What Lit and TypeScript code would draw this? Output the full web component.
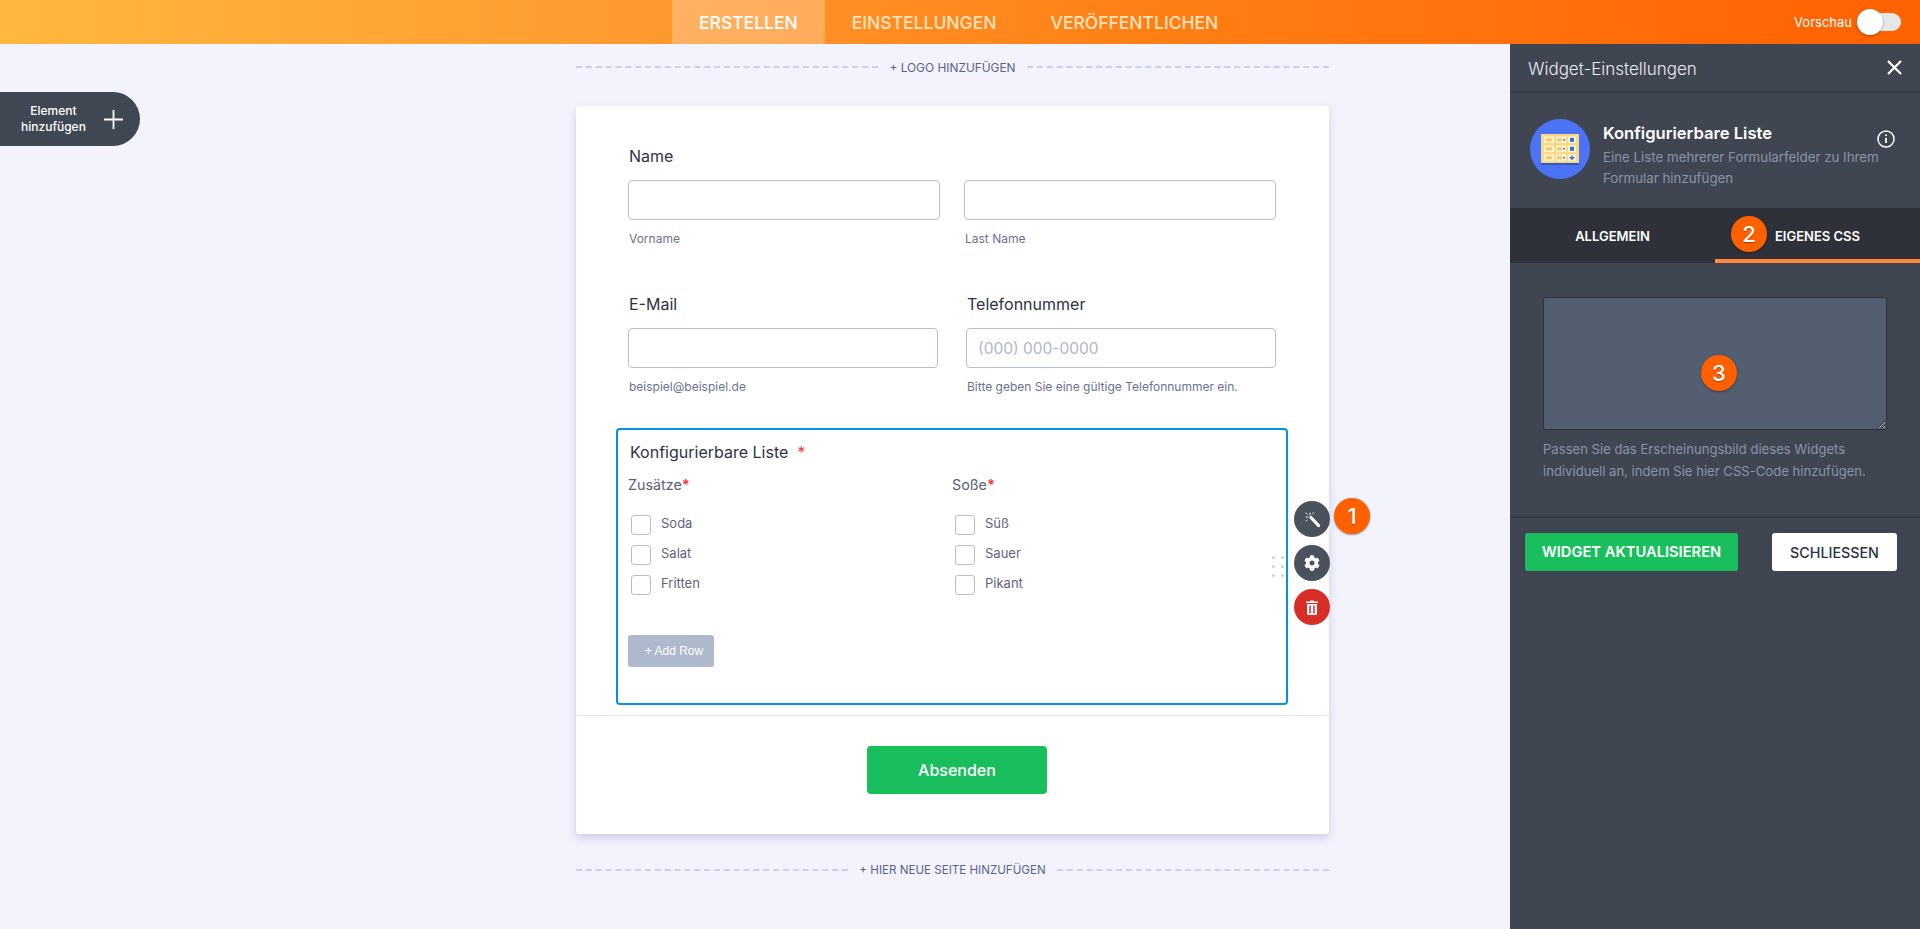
import { LitElement, html, css, svg } from 'lit';
import { customElement } from 'lit/decorators.js';

const COG =
  'M487.4 315.7l-42.6-24.6c4.3-23.2 4.3-47 0-70.2l42.6-24.6c4.9-2.8 7.1-8.6 5.5-14-11.1-35.6-30-67.8-54.7-94.6-3.8-4.1-10-5.1-14.8-2.3L380.8 110c-17.9-15.4-38.5-27.3-60.8-35.1V25.8c0-5.6-3.9-10.5-9.4-11.7-36.7-8.2-74.3-7.8-109.2 0-5.5 1.2-9.4 6.1-9.4 11.7V75c-22.2 7.9-42.8 19.8-60.8 35.1L88.7 85.5c-4.9-2.8-11-1.9-14.8 2.3-24.7 26.7-43.6 58.9-54.7 94.6-1.7 5.4.6 11.2 5.5 14L67.3 221c-4.3 23.2-4.3 47 0 70.2l-42.6 24.6c-4.9 2.8-7.1 8.6-5.5 14 11.1 35.6 30 67.8 54.7 94.6 3.8 4.1 10 5.1 14.8 2.3l42.6-24.6c17.9 15.4 38.5 27.3 60.8 35.1v49.2c0 5.6 3.9 10.5 9.4 11.7 36.7 8.2 74.3 7.8 109.2 0 5.5-1.2 9.4-6.1 9.4-11.7v-49.2c22.2-7.9 42.8-19.8 60.8-35.1l42.6 24.6c4.9 2.8 11 1.9 14.8-2.3 24.7-26.7 43.6-58.9 54.7-94.6 1.5-5.5-.7-11.3-5.6-14.1zM256 336c-44.1 0-80-35.9-80-80s35.9-80 80-80 80 35.9 80 80-35.9 80-80 80z';

const wandIcon = html`<svg width="18" height="18" viewBox="0 0 18 18" fill="none" stroke="#fff" stroke-linecap="round">
  <path d="M8 7.5 15.5 15.5" stroke-width="3.2" />
  <path d="M7 3v2.2M3 7h2.2M2.8 2.8l1.4 1.4M10.6 2.6 9.6 3.8M3 11l1.2-1" stroke-width="0.9" />
</svg>`;

const cogIcon = html`<svg width="16" height="16" viewBox="0 0 512 512" fill="#fff"><path d=${COG} /></svg>`;

const trashIcon = html`<svg width="12" height="15" viewBox="0 0 12 15" fill="#fff">
  <path d="M0 1.6h3.8L4.4.4h3.2l.6 1.2H12V3H0zM1 4h10v9.6c0 .8-.6 1.4-1.4 1.4H2.4C1.600 15 1 14.400 1 13.600zM3.300 5.500v8h1.500v-8zM7.200 5.500v8h1.500v-8z" fill-rule="evenodd" />
</svg>`;

// one row of the little table in the widget icon
const tableRow = (y: number, last: boolean) => svg`
  <rect x="14" y=${y} width="10" height="6.500" fill="#fff3d6" />
  <rect x="16" y=${y + 1.800} width="6" height="3" fill="#f5c860" />
  <rect x="26" y=${y} width="10" height="6.500" fill="#fff3d6" />
  <rect x="27" y=${y + 1.800} width="5" height="3" fill="#f5c860" />
  <rect x="33" y=${y + 2.500} width="2" height="1.500" fill="#3f7fd8" />
  <rect x="38" y=${y} width="8" height="6.500" fill="#fff3d6" />
  ${last
    ? svg`<path d=${`M39.500 ${y + 3.200}h5M42 ${y + 1}v4.500`} stroke="#2f74d0" stroke-width="1.400" />`
    : svg`<rect x="40" y=${y + 1.300} width="4" height="4" fill="#2f74d0" />`}
`;

const listIcon = html`<svg class="widget-icon" width="60" height="60" viewBox="0 0 60 60">
  <circle cx="30" cy="30" r="30" fill="#4a73f5" />
  <rect x="11" y="16" width="38" height="30" fill="#3558b8" />
  <rect x="11" y="15" width="38" height="29" fill="#fbd884" />
  ${tableRow(17.500, false)}${tableRow(26.500, false)}${tableRow(35.500, true)}
</svg>`;

@customElement('app-root')
export class AppRoot extends LitElement {
  static styles = css`
    :host {
      display: block;
      position: relative;
      height: 929px;
      overflow: hidden;
      background: #f3f3fe;
      font-family: Inter, 'Liberation Sans', sans-serif;
      color: #2c3345;
    }

    /* Top bar */
    .topbar {
      position: relative;
      display: flex;
      height: 44px;
      padding-left: 672px;
      background: linear-gradient(90deg, #ffb83e 0%, #ff9a2e 33%, #ff7f15 60%, #ff6100 100%);
    }
    .tabs {
      display: flex;
    }
    .tab {
      display: flex;
      align-items: center;
      padding: 0 27px;
      font-size: 17.5px;
      font-weight: 500;
      color: #ffe3bf;
    }
    .tab.active {
      color: #fff;
      background: rgba(255, 255, 255, 0.25);
    }
    .preview {
      position: absolute;
      right: 19px;
      top: 0;
      height: 44px;
      display: flex;
      align-items: center;
      gap: 5px;
      font-size: 13px;
      color: #fff;
    }
    .switch {
      position: relative;
      width: 44px;
      height: 18px;
      border-radius: 9px;
      background: #e4e9e7;
    }
    .switch::after {
      content: '';
      position: absolute;
      left: 0;
      top: -4px;
      width: 26px;
      height: 26px;
      border-radius: 50%;
      background: #fff;
      box-shadow: 0 1px 3px rgba(0, 0, 0, 0.3);
    }

    .main {
      display: flex;
      height: 885px;
    }

    /* Canvas with the form */
    .canvas {
      flex: 1;
      padding-left: 576px;
    }
    .add-element {
      position: absolute;
      left: 0;
      top: 92px;
      width: 140px;
      height: 54px;
      display: flex;
      align-items: center;
      box-sizing: border-box;
      padding-left: 21px;
      gap: 18px;
      background: #3f4753;
      border-radius: 0 27px 27px 0;
      color: #fff;
      font-size: 12px;
      font-weight: 500;
      line-height: 16px;
      text-align: center;
    }
    .page-line {
      width: 753px;
      display: flex;
      align-items: center;
      gap: 11px;
      font-size: 12px;
      color: #5b6385;
      white-space: nowrap;
    }
    .page-line::before,
    .page-line::after {
      content: '';
      flex: 1;
      border-top: 2px dashed #ccd0ec;
    }
    .page-line.logo {
      height: 16px;
      margin-top: 15px;
      margin-bottom: 31px;
      font-size: 11.9px;
    }
    .page-line.new-page {
      height: 16px;
      margin-top: 28px;
      font-size: 11.6px;
    }
    .card {
      width: 753px;
      height: 728px;
      box-sizing: border-box;
      padding-top: 40px;
      background: #fff;
      border-radius: 3px;
      box-shadow: 0 4px 8px rgba(87, 90, 140, 0.25);
    }
    .row {
      display: grid;
      margin: 0 53px 0 52px;
    }
    .row.first {
      grid-template-columns: 312px 312px;
      column-gap: 24px;
      margin-bottom: 47px;
    }
    .row.second {
      grid-template-columns: 310px 310px;
      column-gap: 28px;
      margin-bottom: 33px;
    }
    .field-label {
      height: 20px;
      margin: 0 0 14px 1px;
      font-size: 16px;
      line-height: 20px;
      color: #2c3345;
    }
    .field-input {
      display: block;
      width: 100%;
      height: 40px;
      box-sizing: border-box;
      padding: 0 11px;
      border: 1px solid #b8bdc9;
      border-radius: 4px;
      background: #fff;
      font: 15.5px Inter, 'Liberation Sans', sans-serif;
      outline: none;
    }
    .field-input::placeholder {
      color: #b0b6c5;
    }
    .sub-label {
      margin: 11px 0 0 1px;
      font-size: 12px;
      line-height: 16px;
      color: #6a7291;
    }
    .spacer-label {
      visibility: hidden;
    }

    /* Selected widget */
    .list-box {
      position: relative;
      height: 277px;
      box-sizing: border-box;
      margin: 0 41px 0 40px;
      padding: 12px 10px 0;
      border: 2px solid #0293e2;
      border-radius: 4px;
    }
    .list-title {
      margin-left: 2px;
      font-size: 16px;
      line-height: 20px;
      color: #2c3345;
    }
    .req {
      margin-left: 9px;
      color: #f23a3c;
    }
    .columns {
      display: grid;
      grid-template-columns: 324px 324px;
      margin-top: 14px;
    }
    .col-title {
      font-size: 14.3px;
      line-height: 18px;
      color: #57607d;
    }
    .col-title span {
      color: #f23a3c;
      font-weight: 700;
    }
    .options {
      display: flex;
      flex-direction: column;
      gap: 10px;
      margin: 21px 0 0 3px;
    }
    .option {
      display: flex;
      align-items: flex-start;
      gap: 10px;
      height: 20px;
      font-size: 13px;
      line-height: 16px;
      color: #5e657c;
    }
    .box {
      width: 20px;
      height: 20px;
      box-sizing: border-box;
      border: 1px solid #b8bdc9;
      border-radius: 3px;
    }
    .add-row {
      width: 86px;
      height: 32px;
      margin-top: 40px;
      padding: 0 0 0 6px;
      border: none;
      border-radius: 3px;
      background: #aeb9cc;
      color: #fff;
      font: 12px 'Liberation Sans', sans-serif;
    }

    .grip {
      position: absolute;
      left: 654px;
      top: 126px;
      display: grid;
      grid-template-columns: 3px 3px;
      gap: 6px;
    }
    .grip i {
      width: 3px;
      height: 3px;
      border-radius: 50%;
      background: #c8cfdc;
    }
    .actions {
      position: absolute;
      left: 676px;
      top: 71px;
      display: flex;
      flex-direction: column;
      gap: 8px;
    }
    .action {
      width: 36px;
      height: 36px;
      display: flex;
      align-items: center;
      justify-content: center;
      border-radius: 50%;
      background: #4a525e;
    }
    .action.danger {
      background: #d72f27;
    }

    /* Numbered callouts */
    .badge {
      position: absolute;
      width: 36px;
      height: 36px;
      display: flex;
      align-items: center;
      justify-content: center;
      border-radius: 50%;
      background: #ff6100;
      color: #fff;
      font-size: 22px;
      font-weight: 500;
      text-shadow: 0 1px 1px rgba(0, 0, 0, 0.35);
      box-shadow: 0 1px 2px rgba(0, 0, 0, 0.4);
    }
    .badge.one {
      left: 716px;
      top: 68px;
    }
    .badge.two {
      left: 1731px;
      top: 216px;
    }
    .badge.three {
      left: 191px;
      top: 92px;
    }

    .submit-row {
      display: flex;
      justify-content: center;
      margin-top: 10px;
      padding: 30px 0 0 9px;
      border-top: 1px solid #e3e5f0;
    }
    .submit {
      width: 180px;
      height: 48px;
      border: none;
      border-radius: 4px;
      background: #19bf5d;
      color: #fff;
      font: 500 16px Inter, 'Liberation Sans', sans-serif;
    }

    /* Settings panel */
    .panel {
      width: 410px;
      flex: none;
      background: #3f4652;
      color: #fff;
    }
    .panel-head {
      height: 49px;
      box-sizing: border-box;
      padding: 0 18px;
      display: flex;
      align-items: center;
      justify-content: space-between;
      border-bottom: 2px solid #363b46;
      font-size: 17px;
      font-weight: 300;
      color: #e8ecf4;
    }
    .panel-head span {
      margin-top: 3px;
    }
    .widget {
      position: relative;
      height: 115px;
      box-sizing: border-box;
      padding: 26px 20px 0 20px;
      display: flex;
      gap: 13px;
    }
    .widget-icon {
      flex: none;
    }
    .widget-name {
      font-size: 16.6px;
      font-weight: 600;
      line-height: 24px;
      margin-top: 2px;
      white-space: nowrap;
    }
    .widget-desc {
      margin-top: 2px;
      font-size: 13.3px;
      line-height: 21px;
      color: #8a94a8;
      width: 290px;
    }
    .info {
      position: absolute;
      left: 367px;
      top: 37px;
    }
    .panel-tabs {
      display: grid;
      grid-template-columns: 205px 205px;
      height: 55px;
      background: #2e3139;
      font-size: 13px;
      font-weight: 600;
    }
    .panel-tab {
      position: relative;
      display: flex;
      align-items: center;
      justify-content: center;
      box-sizing: border-box;
    }
    .panel-tab.active {
      border-bottom: 4px solid #ff8a3d;
      padding-top: 4px;
    }
    .css-pane {
      position: relative;
      padding: 34px 33px 0;
      height: 255px;
      box-sizing: border-box;
      border-bottom: 2px solid #363b46;
    }
    .css-input {
      display: block;
      width: 344px;
      height: 133px;
      box-sizing: border-box;
      border: 1px solid #2e3139;
      border-radius: 2px;
      background: #535e70;
      resize: vertical;
      outline: none;
    }
    .css-help {
      margin-top: 8px;
      font-size: 13.1px;
      line-height: 22px;
      color: #8a94a8;
      width: 344px;
    }
    .panel-actions {
      display: flex;
      justify-content: space-between;
      padding: 15px 23px 0 15px;
    }
    .panel-btn {
      height: 38px;
      border: none;
      border-radius: 3px;
      font: 600 14.7px Inter, 'Liberation Sans', sans-serif;
    }
    .panel-btn.update {
      width: 213px;
      background: #19bf5d;
      color: #fff;
    }
    .panel-btn.close {
      width: 125px;
      background: #fff;
      color: #2c3345;
      font-size: 14.3px;
      font-weight: 500;
    }
  `;

  render() {
    return html`
      <header class="topbar">
        <nav class="tabs">
          <div class="tab active">ERSTELLEN</div>
          <div class="tab">EINSTELLUNGEN</div>
          <div class="tab">VERÖFFENTLICHEN</div>
        </nav>
        <div class="preview">Vorschau <span class="switch"></span></div>
      </header>
      <div class="main">
        <div class="canvas">
          <div class="add-element">
            <span>Element<br />hinzufügen</span>
            <svg width="19" height="19" viewBox="0 0 19 19" stroke="#fff" stroke-width="1.800"><path d="M9.500 0v19M0 9.500h19" /></svg>
          </div>
          <div class="page-line logo">+ LOGO HINZUFÜGEN</div>
          <section class="card">
            <div class="row first">
              <div>
                <div class="field-label">Name</div>
                <input class="field-input" />
                <div class="sub-label">Vorname</div>
              </div>
              <div>
                <div class="field-label spacer-label">&nbsp;</div>
                <input class="field-input" />
                <div class="sub-label">Last Name</div>
              </div>
            </div>
            <div class="row second">
              <div>
                <div class="field-label">E-Mail</div>
                <input class="field-input" />
                <div class="sub-label">beispiel@beispiel.de</div>
              </div>
              <div>
                <div class="field-label">Telefonnummer</div>
                <input class="field-input" placeholder="(000) 000-0000" />
                <div class="sub-label">Bitte geben Sie eine gültige Telefonnummer ein.</div>
              </div>
            </div>
            <div class="list-box">
              <div class="list-title">Konfigurierbare Liste<span class="req">*</span></div>
              <div class="columns">
                ${this.renderColumn('Zusätze', ['Soda', 'Salat', 'Fritten'])}
                ${this.renderColumn('Soße', ['Süß', 'Sauer', 'Pikant'])}
              </div>
              <button class="add-row">+ Add Row</button>
              <div class="grip"><i></i><i></i><i></i><i></i><i></i><i></i></div>
              <div class="actions">
                <div class="action">${wandIcon}</div>
                <div class="action">${cogIcon}</div>
                <div class="action danger">${trashIcon}</div>
              </div>
              <div class="badge one">1</div>
            </div>
            <div class="submit-row"><button class="submit">Absenden</button></div>
          </section>
          <div class="page-line new-page">+ HIER NEUE SEITE HINZUFÜGEN</div>
        </div>
        <aside class="panel">
          <div class="panel-head">
            <span>Widget-Einstellungen</span>
            <svg width="15" height="15" viewBox="0 0 15 15" stroke="#fff" stroke-width="2.200"><path d="M1 1l13 13M14 1 1 14" /></svg>
          </div>
          <div class="widget">
            ${listIcon}
            <div>
              <div class="widget-name">Konfigurierbare Liste</div>
              <div class="widget-desc">Eine Liste mehrerer Formularfelder zu Ihrem Formular hinzufügen</div>
            </div>
            <svg class="info" width="18" height="18" viewBox="0 0 18 18" fill="none" stroke="#fff" stroke-width="1.500">
              <circle cx="9" cy="9" r="8" />
              <path d="M9 8v5" stroke-width="1.800" />
              <circle cx="9" cy="5.300" r="1" fill="#fff" stroke="none" />
            </svg>
          </div>
          <div class="panel-tabs">
            <div class="panel-tab">ALLGEMEIN</div>
            <div class="panel-tab active">EIGENES CSS</div>
          </div>
          <div class="css-pane">
            <textarea class="css-input"></textarea>
            <div class="css-help">Passen Sie das Erscheinungsbild dieses Widgets individuell an, indem Sie hier CSS-Code hinzufügen.</div>
            <div class="badge three">3</div>
          </div>
          <div class="panel-actions">
            <button class="panel-btn update">WIDGET AKTUALISIEREN</button>
            <button class="panel-btn close">SCHLIESSEN</button>
          </div>
        </aside>
      </div>
      <div class="badge two">2</div>
    `;
  }

  private renderColumn(title: string, options: string[]) {
    return html`
      <div>
        <div class="col-title">${title}<span>*</span></div>
        <div class="options">
          ${options.map((o) => html`<div class="option"><span class="box"></span>${o}</div>`)}
        </div>
      </div>
    `;
  }
}
